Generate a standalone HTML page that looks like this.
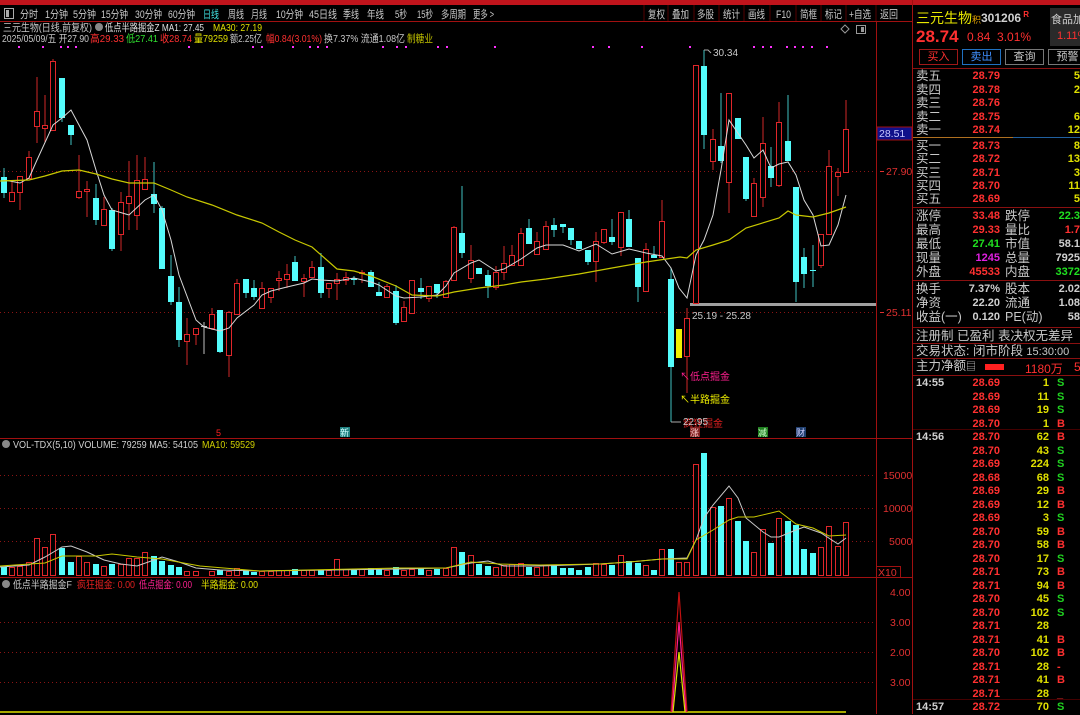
<!DOCTYPE html>
<html><head><meta charset="utf-8">
<style>
*{margin:0;padding:0;box-sizing:border-box}
body{width:1080px;height:714px;background:#000;overflow:hidden;position:relative;font-family:"Liberation Sans","Noto Sans CJK SC",sans-serif;font-size:11px;color:#c8c8c8}
.a{position:absolute;white-space:nowrap}
svg text{font-family:"Liberation Sans","Noto Sans CJK SC",sans-serif}
.r{fill:#000;stroke:#e0262a;stroke-width:1}
.c{fill:#54fcfc}
.rp .l{position:absolute;left:916px;font-size:12.5px;line-height:14px;color:#c8c8c8}
.rp .p{position:absolute;left:950px;width:50px;text-align:right;color:#ff3030;font-weight:bold;font-size:11px}
.rp .v{position:absolute;left:1040px;width:40px;text-align:right;color:#e0e000;font-weight:bold;font-size:11px}
.hr{position:absolute;left:913px;width:167px;height:1px;background:#8a1010}
.tk{position:absolute;font-size:11px;font-weight:bold}
</style></head><body>
<div class="a" style="left:0;top:0;width:1080px;height:5px;background:#c0141c"></div>
<svg class="a" style="left:0;top:0" width="913" height="714" viewBox="0 0 913 714">
<rect x="0" y="5" width="913" height="16" fill="#000"/>
<line x1="0" y1="21.5" x2="913" y2="21.5" stroke="#a01010"/>
<rect x="4.5" y="8.5" width="9" height="10" fill="none" stroke="#aaa"/><rect x="6" y="10" width="3" height="7" fill="#aaa"/>
<g font-size="11" fill="#c8c8c8" lengthAdjust="spacingAndGlyphs">
<text x="20" y="18" textLength="18" lengthAdjust="spacingAndGlyphs">分时</text>
<text x="45" y="18" textLength="23" lengthAdjust="spacingAndGlyphs">1分钟</text>
<text x="73" y="18" textLength="23" lengthAdjust="spacingAndGlyphs">5分钟</text>
<text x="101" y="18" textLength="27" lengthAdjust="spacingAndGlyphs">15分钟</text>
<text x="135" y="18" textLength="27" lengthAdjust="spacingAndGlyphs">30分钟</text>
<text x="168" y="18" textLength="27" lengthAdjust="spacingAndGlyphs">60分钟</text>
<text x="203" y="18" textLength="16" lengthAdjust="spacingAndGlyphs" fill="#40e0e0">日线</text>
<text x="228" y="18" textLength="16" lengthAdjust="spacingAndGlyphs">周线</text>
<text x="251" y="18" textLength="16" lengthAdjust="spacingAndGlyphs">月线</text>
<text x="276" y="18" textLength="27" lengthAdjust="spacingAndGlyphs">10分钟</text>
<text x="309" y="18" textLength="28" lengthAdjust="spacingAndGlyphs">45日线</text>
<text x="343" y="18" textLength="16" lengthAdjust="spacingAndGlyphs">季线</text>
<text x="367" y="18" textLength="17" lengthAdjust="spacingAndGlyphs">年线</text>
<text x="395" y="18" textLength="12" lengthAdjust="spacingAndGlyphs">5秒</text>
<text x="417" y="18" textLength="16" lengthAdjust="spacingAndGlyphs">15秒</text>
<text x="441" y="18" textLength="25" lengthAdjust="spacingAndGlyphs">多周期</text>
<text x="473" y="18" textLength="21" lengthAdjust="spacingAndGlyphs">更多 &gt;</text>
<text x="648" y="18" textLength="17" lengthAdjust="spacingAndGlyphs">复权</text>
<text x="672" y="18" textLength="17" lengthAdjust="spacingAndGlyphs">叠加</text>
<text x="697" y="18" textLength="17" lengthAdjust="spacingAndGlyphs">多股</text>
<text x="723" y="18" textLength="17" lengthAdjust="spacingAndGlyphs">统计</text>
<text x="748" y="18" textLength="17" lengthAdjust="spacingAndGlyphs">画线</text>
<text x="776" y="18" textLength="15" lengthAdjust="spacingAndGlyphs">F10</text>
<text x="800" y="18" textLength="17" lengthAdjust="spacingAndGlyphs">简框</text>
<text x="825" y="18" textLength="17" lengthAdjust="spacingAndGlyphs">标记</text>
<text x="849" y="18" textLength="22" lengthAdjust="spacingAndGlyphs">+自选</text>
<text x="880" y="18" textLength="18" lengthAdjust="spacingAndGlyphs">返回</text>
</g>
<g stroke="#500"><line x1="644" y1="5" x2="644" y2="21"/><line x1="668" y1="5" x2="668" y2="21"/><line x1="694" y1="5" x2="694" y2="21"/><line x1="719" y1="5" x2="719" y2="21"/><line x1="744" y1="5" x2="744" y2="21"/><line x1="770" y1="5" x2="770" y2="21"/><line x1="796" y1="5" x2="796" y2="21"/><line x1="821" y1="5" x2="821" y2="21"/><line x1="846" y1="5" x2="846" y2="21"/><line x1="876" y1="5" x2="876" y2="21"/></g>
<g font-size="10.5">
<text x="3" y="31" fill="#c8c8c8" textLength="89" lengthAdjust="spacingAndGlyphs">三元生物(日线,前复权)</text>
<circle cx="99" cy="27" r="4" fill="#888"/>
<text x="105" y="31" fill="#e0e0e0" textLength="99" lengthAdjust="spacingAndGlyphs">低点半路掘金Z  MA1: 27.45</text>
<text x="213" y="31" fill="#e0e000" textLength="49" lengthAdjust="spacingAndGlyphs">MA30: 27.19</text>
<text x="2" y="42" fill="#c8c8c8" textLength="87" lengthAdjust="spacingAndGlyphs">2025/05/09/五 开27.90</text>
<text x="90" y="42" fill="#ff3030" textLength="34" lengthAdjust="spacingAndGlyphs">高29.33</text>
<text x="126" y="42" fill="#30e030" textLength="32" lengthAdjust="spacingAndGlyphs">低27.41</text>
<text x="160" y="42" fill="#ff3030" textLength="32" lengthAdjust="spacingAndGlyphs">收28.74</text>
<text x="194" y="42" fill="#e0e000" textLength="34" lengthAdjust="spacingAndGlyphs">量79259</text>
<text x="230" y="42" fill="#c8c8c8" textLength="32" lengthAdjust="spacingAndGlyphs">额2.25亿</text>
<text x="266" y="42" fill="#ff3030" textLength="56" lengthAdjust="spacingAndGlyphs">幅0.84(3.01%)</text>
<text x="324" y="42" fill="#c8c8c8" textLength="81" lengthAdjust="spacingAndGlyphs">换7.37% 流通1.08亿</text>
<text x="407" y="42" fill="#c0c000" textLength="26" lengthAdjust="spacingAndGlyphs">制糖业</text>
</g>
<g fill="#ff30ff">
<rect x="18" y="46" width="2" height="2"/><rect x="42" y="46" width="2" height="2"/><rect x="60" y="46" width="2" height="2"/><rect x="67" y="46" width="2" height="2"/><rect x="75" y="46" width="2" height="2"/><rect x="188" y="46" width="2" height="2"/><rect x="252" y="46" width="2" height="2"/><rect x="261" y="46" width="2" height="2"/><rect x="292" y="46" width="2" height="2"/><rect x="309" y="46" width="2" height="2"/><rect x="317" y="46" width="2" height="2"/><rect x="326" y="46" width="2" height="2"/><rect x="382" y="46" width="2" height="2"/><rect x="396" y="46" width="2" height="2"/><rect x="405" y="46" width="2" height="2"/><rect x="437" y="46" width="2" height="2"/><rect x="446" y="46" width="2" height="2"/><rect x="494" y="46" width="2" height="2"/><rect x="592" y="46" width="2" height="2"/><rect x="608" y="46" width="2" height="2"/><rect x="641" y="46" width="2" height="2"/><rect x="689" y="46" width="2" height="2"/><rect x="753" y="46" width="2" height="2"/><rect x="762" y="46" width="2" height="2"/><rect x="770" y="46" width="2" height="2"/><rect x="786" y="46" width="2" height="2"/><rect x="794" y="46" width="2" height="2"/><rect x="802" y="46" width="2" height="2"/><rect x="811" y="46" width="2" height="2"/><rect x="826" y="46" width="2" height="2"/>
</g>
<path d="M845 25 l4 4 l-4 4 l-4 -4z" fill="none" stroke="#999"/>
<rect x="856.5" y="25.5" width="9" height="8" fill="none" stroke="#999"/><rect x="861" y="27" width="3" height="5" fill="#999"/>
<line x1="876.5" y1="22" x2="876.5" y2="714" stroke="#a01010"/>
<line x1="0" y1="438.5" x2="913" y2="438.5" stroke="#a01010"/>
<line x1="0" y1="577.5" x2="913" y2="577.5" stroke="#a01010"/>
<line x1="912.5" y1="0" x2="912.5" y2="714" stroke="#a01010"/>
<g stroke="#8a1414" stroke-dasharray="1,3">
<line x1="0" y1="171.5" x2="876" y2="171.5"/><line x1="0" y1="312.5" x2="876" y2="312.5"/>
<line x1="0" y1="475.5" x2="876" y2="475.5"/><line x1="0" y1="508.5" x2="876" y2="508.5"/><line x1="0" y1="541.5" x2="876" y2="541.5"/>
<line x1="0" y1="622.5" x2="876" y2="622.5"/><line x1="0" y1="652.5" x2="876" y2="652.5"/><line x1="0" y1="682.5" x2="876" y2="682.5"/>
</g>
<g font-size="10.5" fill="#e03030">
<rect x="877" y="127" width="35" height="13" fill="#10108a" stroke="#a01010"/>
<text x="879" y="137" fill="#c8c8ff">28.51</text>
<text x="886" y="175">27.90</text><text x="886" y="316">25.11</text>
<text x="883" y="479">15000</text><text x="883" y="512">10000</text><text x="889" y="545">5000</text>
<rect x="876.5" y="566.5" width="24" height="11" fill="none" stroke="#a01010"/><text x="878" y="576">X10</text>
<text x="890" y="596">4.00</text><text x="890" y="626">3.00</text><text x="890" y="656">2.00</text><text x="890" y="686">3.00</text>
</g>
<line x1="880" y1="171.5" x2="884" y2="171.5" stroke="#e03030"/><line x1="880" y1="312.5" x2="884" y2="312.5" stroke="#e03030"/>
<rect x="690" y="303" width="186" height="3" fill="#a0a0a0"/>
<path stroke="#d02828" fill="none" d="M12 182V202M20 176V210M29 151V178M37 77V143M45 95V142M53 59V130M79 155V199M87 181V217M104 197V225M121 192V251M129 161V230M137 155V230M145 157V189M187 318V365M196 328V345M212 308V330M229 311V377M237 279V314M262 282V308M271 288V303M279 271V291M287 264V288M304 274V297M312 261V277M329 283V298M337 273V300M346 272V285M362 270V283M387 284V298M404 301V322M412 280V313M429 286V302M446 280V298M454 226V280M471 245V283M496 266V290M504 246V280M512 245V265M521 228V265M537 232V254M546 221V249M596 232V282M604 229V244M621 212V256M646 243V291M662 200V257M687 308V393M696 65V303M713 129V170M729 93V213M754 178V216M763 117V207M779 102V187M821 234V268M829 150V234M838 168V196M846 100V172"/>
<path stroke="#40c0c0" fill="none" d="M4 168V198M62 78V122M71 125V145M96 184V225M112 208V251M154 162V213M162 206V269M171 255V305M179 287V347M220 310V353M246 279V298M254 280V300M295 256V281M321 253V298M354 276V285M371 270V287M379 282V296M396 285V325M421 278V299M437 284V298M462 186V258M479 268V274M488 270V298M529 219V244M554 218V237M563 224V233M571 228V245M579 241V249M588 250V265M612 219V245M629 210V247M638 258V302M654 246V258M671 268V422M704 50V149M721 93V163M738 118V139M746 157V201M771 147V187M788 95V161M796 187V302M804 248V288M813 245V287"/>
<path stroke="#c0c0c0" d="M204 322V354M201 326.5H207"/>
<g class="r">
<rect x="9.5" y="192.5" width="5" height="9"/><rect x="17.5" y="176.5" width="5" height="16"/><rect x="26.5" y="157.5" width="5" height="21"/><rect x="34.5" y="111.5" width="5" height="15"/><rect x="42.5" y="125.5" width="5" height="3"/><rect x="50.5" y="61.5" width="5" height="69"/><rect x="76.5" y="191.5" width="5" height="6"/><rect x="84.5" y="189.5" width="5" height="2"/><rect x="101.5" y="209.5" width="5" height="16"/><rect x="118.5" y="202.5" width="5" height="32"/><rect x="126.5" y="196.5" width="5" height="7"/><rect x="134.5" y="180.5" width="5" height="35"/><rect x="142.5" y="179.5" width="5" height="10"/><rect x="184.5" y="334.5" width="5" height="7"/><rect x="193.5" y="328.5" width="5" height="6"/><rect x="209.5" y="314.5" width="5" height="14"/><rect x="226.5" y="312.5" width="5" height="43"/><rect x="234.5" y="283.5" width="5" height="31"/><rect x="259.5" y="288.5" width="5" height="20"/><rect x="268.5" y="288.5" width="5" height="9"/><rect x="276.5" y="278.5" width="5" height="2"/><rect x="284.5" y="274.5" width="5" height="5"/><rect x="301.5" y="278.5" width="5" height="3"/><rect x="309.5" y="267.5" width="5" height="10"/><rect x="326.5" y="283.5" width="5" height="5"/><rect x="334.5" y="279.5" width="5" height="4"/><rect x="343.5" y="277.5" width="5" height="3"/><rect x="359.5" y="272.5" width="5" height="1"/><rect x="384.5" y="286.5" width="5" height="11"/><rect x="401.5" y="307.5" width="5" height="14"/><rect x="409.5" y="280.5" width="5" height="33"/><rect x="426.5" y="286.5" width="5" height="12"/><rect x="443.5" y="281.5" width="5" height="16"/><rect x="451.5" y="227.5" width="5" height="53"/><rect x="468.5" y="260.5" width="5" height="18"/><rect x="493.5" y="272.5" width="5" height="15"/><rect x="501.5" y="263.5" width="5" height="9"/><rect x="509.5" y="255.5" width="5" height="10"/><rect x="518.5" y="233.5" width="5" height="32"/><rect x="534.5" y="241.5" width="5" height="13"/><rect x="543.5" y="226.5" width="5" height="23"/><rect x="593.5" y="241.5" width="5" height="20"/><rect x="601.5" y="229.5" width="5" height="13"/><rect x="618.5" y="212.5" width="5" height="35"/><rect x="643.5" y="249.5" width="5" height="42"/><rect x="659.5" y="221.5" width="5" height="36"/><rect x="684.5" y="318.5" width="5" height="38"/><rect x="693.5" y="65.5" width="5" height="238"/><rect x="710.5" y="139.5" width="5" height="22"/><rect x="726.5" y="93.5" width="5" height="89"/><rect x="751.5" y="183.5" width="5" height="33"/><rect x="760.5" y="143.5" width="5" height="54"/><rect x="776.5" y="122.5" width="5" height="63"/><rect x="818.5" y="234.5" width="5" height="31"/><rect x="826.5" y="166.5" width="5" height="68"/><rect x="835.5" y="172.5" width="5" height="4"/><rect x="843.5" y="129.5" width="5" height="43"/>
</g>
<g class="c">
<rect x="1" y="177" width="6" height="16"/><rect x="59" y="78" width="6" height="40"/><rect x="68" y="125" width="6" height="10"/><rect x="93" y="198" width="6" height="22"/><rect x="109" y="210" width="6" height="39"/><rect x="151" y="194" width="6" height="10"/><rect x="159" y="208" width="6" height="61"/><rect x="168" y="276" width="6" height="26"/><rect x="176" y="302" width="6" height="38"/><rect x="217" y="310" width="6" height="42"/><rect x="243" y="279" width="6" height="14"/><rect x="251" y="288" width="6" height="9"/><rect x="292" y="262" width="6" height="19"/><rect x="318" y="267" width="6" height="26"/><rect x="351" y="278" width="6" height="2"/><rect x="368" y="272" width="6" height="15"/><rect x="376" y="292" width="6" height="4"/><rect x="393" y="291" width="6" height="32"/><rect x="418" y="288" width="6" height="4"/><rect x="434" y="284" width="6" height="9"/><rect x="459" y="233" width="6" height="20"/><rect x="476" y="268" width="6" height="6"/><rect x="485" y="275" width="6" height="11"/><rect x="526" y="228" width="6" height="16"/><rect x="551" y="225" width="6" height="5"/><rect x="560" y="224" width="6" height="3"/><rect x="568" y="228" width="6" height="12"/><rect x="576" y="241" width="6" height="8"/><rect x="585" y="250" width="6" height="12"/><rect x="609" y="237" width="6" height="5"/><rect x="626" y="219" width="6" height="28"/><rect x="635" y="258" width="6" height="29"/><rect x="651" y="255" width="6" height="3"/><rect x="668" y="279" width="6" height="88"/><rect x="701" y="66" width="6" height="69"/><rect x="718" y="146" width="6" height="15"/><rect x="735" y="118" width="6" height="21"/><rect x="743" y="157" width="6" height="42"/><rect x="768" y="166" width="6" height="12"/><rect x="785" y="141" width="6" height="20"/><rect x="793" y="187" width="6" height="95"/><rect x="801" y="257" width="6" height="17"/><rect x="810" y="270" width="6" height="1"/>
</g>
<rect x="676" y="329" width="6" height="29" fill="#f0f000"/>
<polyline fill="none" stroke="#d8d8d8" stroke-width="1" points="4,180 20,183 29,178 37,160 53,125 62,118 71,110 87,140 96,170 104,195 112,210 129,215 145,200 154,195 162,210 171,240 179,275 196,320 204,327 220,331 229,328 237,318 254,305 262,295 271,291 287,287 304,283 312,279 321,280 337,281 354,278 371,282 379,285 396,296 404,298 421,297 437,295 446,286 454,273 471,263 479,260 496,271 504,269 521,259 537,248 546,245 563,245 579,251 596,244 612,254 629,249 646,253 662,256 671,268 679,288 687,298 696,255 704,240 713,215 721,170 729,120 746,145 754,158 763,150 771,168 779,164 788,162 796,175 804,200 813,215 821,246 829,245 838,225 846,195"/>
<polyline fill="none" stroke="#c8c800" stroke-width="1.2" points="0,181 29,180 45,176 62,171 79,170 96,174 112,179 129,183 154,183 171,190 187,197 212,205 237,215 262,223 279,232 295,240 312,247 337,269 354,271 371,276 396,286 412,295 437,296 454,292 479,288 504,285 521,282 546,279 579,274 612,268 646,262 680,257 687,258 696,250 713,245 729,240 746,228 779,218 788,211 796,215 813,217 829,213 846,207"/>
<g font-size="10">
<path d="M704 50 h4 l3 3" stroke="#aaa" fill="none"/><text x="713" y="56" fill="#c8c8c8">30.34</text>
<text x="692" y="319" fill="#c8c8c8">25.19 - 25.28</text>
<path d="M671 422 h10" stroke="#aaa"/>
<text x="680" y="380" fill="#ff2090">↖低点掘金</text>
<text x="680" y="403" fill="#f0f000">↖半路掘金</text>
<text x="683" y="427" fill="#e02020">疯狂掘金</text>
<text x="683" y="425" fill="#c8c8c8">22.95</text>
</g>
<g font-size="9">
<text x="216" y="436" fill="#ff2020">5</text>
<rect x="340" y="427" width="10" height="10" fill="#208080"/><text x="340" y="436" fill="#d0ffff">新</text>
<rect x="690" y="427" width="10" height="10" fill="#802020"/><text x="690" y="436" fill="#ffd0d0">涨</text>
<rect x="758" y="427" width="10" height="10" fill="#208020"/><text x="758" y="436" fill="#d0ffd0">减</text>
<rect x="796" y="427" width="10" height="10" fill="#204070"/><text x="796" y="436" fill="#d0d0ff">财</text>
</g>
<circle cx="6" cy="444" r="4" fill="#888"/>
<text x="13" y="448" font-size="10.5" fill="#d0d0d0" textLength="185" lengthAdjust="spacingAndGlyphs">VOL-TDX(5,10) VOLUME: 79259 MA5: 54105</text>
<text x="202" y="448" font-size="10.5" fill="#d0d000" textLength="53" lengthAdjust="spacingAndGlyphs">MA10: 59529</text>
<g class="r">
<rect x="9.5" y="567.5" width="5" height="8"/><rect x="17.5" y="566.5" width="5" height="9"/><rect x="26.5" y="562.5" width="5" height="13"/><rect x="34.5" y="538.5" width="5" height="37"/><rect x="42.5" y="547.5" width="5" height="28"/><rect x="50.5" y="534.5" width="5" height="41"/><rect x="76.5" y="556.5" width="5" height="19"/><rect x="84.5" y="562.5" width="5" height="13"/><rect x="101.5" y="566.5" width="5" height="9"/><rect x="118.5" y="564.5" width="5" height="11"/><rect x="126.5" y="558.5" width="5" height="17"/><rect x="134.5" y="558.5" width="5" height="17"/><rect x="142.5" y="552.5" width="5" height="23"/><rect x="184.5" y="571.5" width="5" height="4"/><rect x="193.5" y="571.5" width="5" height="4"/><rect x="209.5" y="571.5" width="5" height="4"/><rect x="226.5" y="571.5" width="5" height="4"/><rect x="234.5" y="568.5" width="5" height="7"/><rect x="259.5" y="571.5" width="5" height="4"/><rect x="268.5" y="571.5" width="5" height="4"/><rect x="276.5" y="570.5" width="5" height="5"/><rect x="284.5" y="570.5" width="5" height="5"/><rect x="301.5" y="570.5" width="5" height="5"/><rect x="309.5" y="570.5" width="5" height="5"/><rect x="326.5" y="570.5" width="5" height="5"/><rect x="334.5" y="559.5" width="5" height="16"/><rect x="343.5" y="569.5" width="5" height="6"/><rect x="359.5" y="569.5" width="5" height="6"/><rect x="384.5" y="570.5" width="5" height="5"/><rect x="401.5" y="570.5" width="5" height="5"/><rect x="409.5" y="569.5" width="5" height="6"/><rect x="426.5" y="570.5" width="5" height="5"/><rect x="443.5" y="568.5" width="5" height="7"/><rect x="451.5" y="547.5" width="5" height="28"/><rect x="468.5" y="555.5" width="5" height="20"/><rect x="493.5" y="567.5" width="5" height="8"/><rect x="501.5" y="565.5" width="5" height="10"/><rect x="509.5" y="564.5" width="5" height="11"/><rect x="518.5" y="563.5" width="5" height="12"/><rect x="534.5" y="567.5" width="5" height="8"/><rect x="543.5" y="565.5" width="5" height="10"/><rect x="593.5" y="563.5" width="5" height="12"/><rect x="601.5" y="564.5" width="5" height="11"/><rect x="618.5" y="555.5" width="5" height="20"/><rect x="643.5" y="565.5" width="5" height="10"/><rect x="659.5" y="549.5" width="5" height="26"/><rect x="676.5" y="562.5" width="5" height="13"/><rect x="684.5" y="562.5" width="5" height="13"/><rect x="693.5" y="464.5" width="5" height="111"/><rect x="710.5" y="507.5" width="5" height="68"/><rect x="726.5" y="498.5" width="5" height="77"/><rect x="751.5" y="552.5" width="5" height="23"/><rect x="760.5" y="529.5" width="5" height="46"/><rect x="776.5" y="518.5" width="5" height="57"/><rect x="818.5" y="547.5" width="5" height="28"/><rect x="826.5" y="526.5" width="5" height="49"/><rect x="835.5" y="546.5" width="5" height="29"/><rect x="843.5" y="522.5" width="5" height="53"/>
</g>
<g class="c">
<rect x="1" y="567" width="6" height="8"/><rect x="59" y="548" width="6" height="27"/><rect x="68" y="562" width="6" height="13"/><rect x="93" y="564" width="6" height="11"/><rect x="109" y="564" width="6" height="11"/><rect x="151" y="556" width="6" height="19"/><rect x="159" y="561" width="6" height="14"/><rect x="168" y="565" width="6" height="10"/><rect x="176" y="567" width="6" height="8"/><rect x="217" y="570" width="6" height="5"/><rect x="243" y="570" width="6" height="5"/><rect x="251" y="572" width="6" height="3"/><rect x="292" y="569" width="6" height="6"/><rect x="318" y="570" width="6" height="5"/><rect x="351" y="570" width="6" height="5"/><rect x="368" y="568" width="6" height="7"/><rect x="376" y="569" width="6" height="6"/><rect x="393" y="567" width="6" height="8"/><rect x="418" y="568" width="6" height="7"/><rect x="434" y="569" width="6" height="6"/><rect x="459" y="552" width="6" height="23"/><rect x="476" y="564" width="6" height="11"/><rect x="485" y="566" width="6" height="9"/><rect x="526" y="567" width="6" height="8"/><rect x="551" y="565" width="6" height="10"/><rect x="560" y="568" width="6" height="7"/><rect x="568" y="568" width="6" height="7"/><rect x="576" y="570" width="6" height="5"/><rect x="585" y="567" width="6" height="8"/><rect x="609" y="565" width="6" height="10"/><rect x="626" y="561" width="6" height="14"/><rect x="635" y="563" width="6" height="12"/><rect x="651" y="570" width="6" height="5"/><rect x="668" y="549" width="6" height="26"/><rect x="701" y="453" width="6" height="122"/><rect x="718" y="506" width="6" height="69"/><rect x="735" y="521" width="6" height="54"/><rect x="743" y="541" width="6" height="34"/><rect x="768" y="543" width="6" height="32"/><rect x="785" y="521" width="6" height="54"/><rect x="793" y="525" width="6" height="50"/><rect x="801" y="549" width="6" height="26"/><rect x="810" y="553" width="6" height="22"/>
</g>
<polyline fill="none" stroke="#c8c8c8" points="0,567 29,565 45,557 62,547 71,546 87,552 104,560 121,564 137,566 154,560 162,557 179,562 196,568 220,570 260,571 330,570 400,569 446,568 471,563 488,561 504,566 540,566 570,565 600,564 629,562 662,559 687,558 696,540 704,518 713,505 729,486 738,498 746,518 763,532 771,537 779,537 796,530 804,527 821,533 838,544 846,538"/>
<polyline fill="none" stroke="#c8c800" points="0,566 45,563 62,556 96,556 112,554 137,557 162,559 200,566 260,571 400,568 446,568 471,562 500,564 540,565 600,564 629,562 662,559 687,559 696,540 713,530 729,520 738,517 754,517 771,513 779,511 796,524 813,528 829,536 846,535"/>
<circle cx="6" cy="584" r="4" fill="#888"/>
<g font-size="10.5">
<text x="13" y="588" fill="#c8c8c8" textLength="59" lengthAdjust="spacingAndGlyphs">低点半路掘金F</text>
<text x="77" y="588" fill="#e02020" textLength="58" lengthAdjust="spacingAndGlyphs">疯狂掘金: 0.00</text>
<text x="139" y="588" fill="#ff2090" textLength="53" lengthAdjust="spacingAndGlyphs">低点掘金: 0.00</text>
<text x="201" y="588" fill="#e0e000" textLength="57" lengthAdjust="spacingAndGlyphs">半路掘金: 0.00</text>
</g>
<line x1="0" y1="712" x2="846" y2="712" stroke="#e0e000" stroke-width="1.5"/>
<polyline fill="none" stroke="#c01010" stroke-width="1.2" points="671,712 679,592 687,712"/>
<polyline fill="none" stroke="#ff2090" stroke-width="1.2" points="672,712 679,622 686,712"/>
<polyline fill="none" stroke="#e0e000" stroke-width="1.2" points="673,712 679,652 685,712"/>
</svg>

<div class="rp">
<div class="a" style="left:916px;top:8px;font-size:14px;color:#e8e800">三元生物<span style="font-size:9px;color:#e0a000">积</span></div>
<div class="a" style="left:981px;top:10px;font-size:12px;font-weight:bold;color:#d0d0d0">301206<sup style="color:#ff3030;font-size:8px"> R</sup></div>
<div class="a" style="left:1050px;top:8px;width:30px;height:38px;background:#2a2a2a"></div>
<div class="a" style="left:1051px;top:11px;font-size:11px;color:#d0d0d0">食品加工</div>
<div class="a" style="left:1057px;top:30px;font-size:11px;color:#ff3030">1.11%</div>
<div class="a" style="left:916px;top:27px;font-size:17px;font-weight:bold;color:#ff3030">28.74</div>
<div class="a" style="left:967px;top:30px;font-size:12px;color:#ff3030">0.84&nbsp;&nbsp;3.01%</div>
<div class="a" style="left:919px;top:49px;width:39px;height:16px;border:1px solid #a01818;color:#ff3030;text-align:center;line-height:14px">买入</div>
<div class="a" style="left:962px;top:49px;width:39px;height:16px;border:1px solid #2070c0;color:#4090ff;text-align:center;line-height:14px">卖出</div>
<div class="a" style="left:1005px;top:49px;width:39px;height:16px;border:1px solid #777;color:#c8c8c8;text-align:center;line-height:14px">查询</div>
<div class="a" style="left:1048px;top:49px;width:39px;height:16px;border:1px solid #777;color:#c8c8c8;text-align:center;line-height:14px">预警</div>
<div class="hr" style="top:68px"></div>
<div class="l" style="top:69px">卖五</div><div class="p" style="top:70px">28.79</div><div class="v" style="top:70px">5</div>
<div class="l" style="top:83px">卖四</div><div class="p" style="top:84px">28.78</div><div class="v" style="top:84px">2</div>
<div class="l" style="top:96px">卖三</div><div class="p" style="top:97px">28.76</div>
<div class="l" style="top:110px">卖二</div><div class="p" style="top:111px">28.75</div><div class="v" style="top:111px">6</div>
<div class="l" style="top:123px">卖一</div><div class="p" style="top:124px">28.74</div><div class="v" style="top:124px">12</div>
<div class="a" style="left:913px;top:137px;width:100px;height:1px;background:#b07020"></div><div class="a" style="left:1013px;top:137px;width:67px;height:1px;background:#2060a0"></div>
<div class="l" style="top:139px">买一</div><div class="p" style="top:140px">28.73</div><div class="v" style="top:140px">8</div>
<div class="l" style="top:152px">买二</div><div class="p" style="top:153px">28.72</div><div class="v" style="top:153px">13</div>
<div class="l" style="top:166px">买三</div><div class="p" style="top:167px">28.71</div><div class="v" style="top:167px">3</div>
<div class="l" style="top:179px">买四</div><div class="p" style="top:180px">28.70</div><div class="v" style="top:180px">11</div>
<div class="l" style="top:192px">买五</div><div class="p" style="top:193px">28.69</div><div class="v" style="top:193px">5</div>
<div class="hr" style="top:207px"></div>
<div class="l" style="top:209px">涨停</div><div class="p" style="top:210px">33.48</div><div class="l" style="top:209px;left:1005px">跌停</div><div class="v" style="top:210px;color:#20e020">22.3</div>
<div class="l" style="top:223px">最高</div><div class="p" style="top:224px">29.33</div><div class="l" style="top:223px;left:1005px">量比</div><div class="v" style="top:224px;color:#ff3030">1.7</div>
<div class="l" style="top:237px">最低</div><div class="p" style="top:238px;color:#20e020">27.41</div><div class="l" style="top:237px;left:1005px">市值</div><div class="v" style="top:238px;color:#d0d0d0">58.1</div>
<div class="l" style="top:251px">现量</div><div class="p" style="top:252px;color:#e020e0">1245</div><div class="l" style="top:251px;left:1005px">总量</div><div class="v" style="top:252px;color:#d0d0d0">7925</div>
<div class="l" style="top:265px">外盘</div><div class="p" style="top:266px">45533</div><div class="l" style="top:265px;left:1005px">内盘</div><div class="v" style="top:266px;color:#20e020">3372</div>
<div class="hr" style="top:280px"></div>
<div class="l" style="top:282px">换手</div><div class="p" style="top:283px;color:#d0d0d0">7.37%</div><div class="l" style="top:282px;left:1005px">股本</div><div class="v" style="top:283px;color:#d0d0d0">2.02</div>
<div class="l" style="top:296px">净资</div><div class="p" style="top:297px;color:#d0d0d0">22.20</div><div class="l" style="top:296px;left:1005px">流通</div><div class="v" style="top:297px;color:#d0d0d0">1.08</div>
<div class="l" style="top:310px">收益(一)</div><div class="p" style="top:311px;color:#d0d0d0">0.120</div><div class="l" style="top:310px;left:1005px">PE(动)</div><div class="v" style="top:311px;color:#d0d0d0">58</div>
<div class="hr" style="top:327px"></div>
<div class="l" style="top:329px">注册制 已盈利 表决权无差异</div>
<div class="hr" style="top:343px"></div>
<div class="l" style="top:344px">交易状态: 闭市阶段 <span style="font-size:11px">15:30:00</span></div>
<div class="hr" style="top:358px"></div>
<div class="l" style="top:359px">主力净额<span style="font-size:10px">▤</span></div>
<div class="a" style="left:985px;top:364px;width:19px;height:6px;background:#ff2020"></div>
<div class="a" style="left:1025px;top:360px;font-size:12px;color:#ff3030">1180万</div>
<div class="a" style="left:1074px;top:360px;font-size:12px;color:#ff3030">5</div>
<div class="hr" style="top:375px"></div>
<div class="hr" style="top:429px;background:#400"></div>
<div class="hr" style="top:699px;background:#400"></div>
<div class="tk" style="left:916px;top:377px;color:#d0d0d0">14:55</div>
<div class="tk" style="left:916px;top:431px;color:#d0d0d0">14:56</div>
<div class="tk" style="left:916px;top:701px;color:#d0d0d0">14:57</div>
<div style="position:absolute;left:950px;top:377px;width:50px;text-align:right;color:#ff3030;font-weight:bold;line-height:13.5px;font-size:11px">28.69<br>28.69<br>28.69<br>28.70<br>28.70<br>28.70<br>28.69<br>28.68<br>28.69<br>28.69<br>28.69<br>28.70<br>28.70<br>28.70<br>28.71<br>28.71<br>28.70<br>28.70<br>28.71<br>28.71<br>28.70<br>28.71<br>28.71<br>28.71<br>28.72</div>
<div style="position:absolute;left:1010px;top:377px;width:39px;text-align:right;color:#e0e000;font-weight:bold;line-height:13.5px;font-size:11px">1<br>11<br>19<br>1<br>62<br>43<br>224<br>68<br>29<br>12<br>3<br>59<br>58<br>17<br>73<br>94<br>45<br>102<br>28<br>41<br>102<br>28<br>41<br>28<br>70</div>
<div style="position:absolute;left:1057px;top:377px;font-weight:bold;line-height:13.5px;font-size:11px"><span style="color:#20d020">S</span><br><span style="color:#20d020">S</span><br><span style="color:#20d020">S</span><br><span style="color:#ff3030">B</span><br><span style="color:#ff3030">B</span><br><span style="color:#20d020">S</span><br><span style="color:#20d020">S</span><br><span style="color:#20d020">S</span><br><span style="color:#ff3030">B</span><br><span style="color:#ff3030">B</span><br><span style="color:#20d020">S</span><br><span style="color:#ff3030">B</span><br><span style="color:#ff3030">B</span><br><span style="color:#20d020">S</span><br><span style="color:#ff3030">B</span><br><span style="color:#ff3030">B</span><br><span style="color:#20d020">S</span><br><span style="color:#20d020">S</span><br>&nbsp;<br><span style="color:#ff3030">B</span><br><span style="color:#ff3030">B</span><br><span style="color:#ff3030">-</span><br><span style="color:#ff3030">B</span><br><span style="color:#ff3030">_</span><br><span style="color:#20d020">S</span></div>
</div>
</body></html>
